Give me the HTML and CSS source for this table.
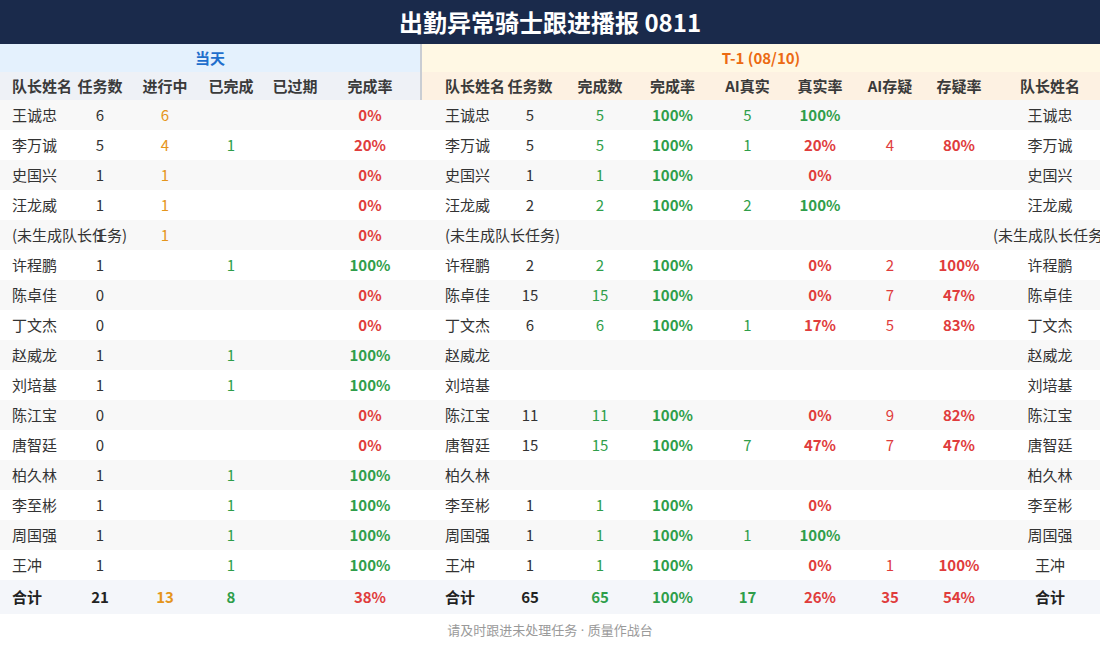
FILE: index.html
```html
<!DOCTYPE html>
<html lang="zh-CN">
<head>
<meta charset="utf-8">
<title>出勤异常骑士跟进播报 0811</title>
<link rel="stylesheet" href="styles.css">
</head>
<body>
<div class="page">
  <div class="title">出勤异常骑士跟进播报 0811</div>

  <div class="row sec">
    <div class="l sec-l">当天</div>
    <div class="r sec-r">T-1 (08/10)</div>
  </div>

  <div class="row head">
    <div class="l">
      <span class="name">队长姓名</span><span>任务数</span><span>进行中</span><span>已完成</span><span>已过期</span><span>完成率</span><span></span>
    </div>
    <div class="r">
      <span class="name">队长姓名</span><span>任务数</span><span>完成数</span><span>完成率</span><span>AI真实</span><span>真实率</span><span>AI存疑</span><span>存疑率</span><span>队长姓名</span>
    </div>
  </div>

  <div class="row alt">
    <div class="l"><span class="name">王诚忠</span><span>6</span><span class="o">6</span><span></span><span></span><span class="rd b">0%</span><span></span></div>
    <div class="r"><span class="name">王诚忠</span><span>5</span><span class="g">5</span><span class="g b">100%</span><span class="g">5</span><span class="g b">100%</span><span></span><span></span><span>王诚忠</span></div>
  </div>
  <div class="row">
    <div class="l"><span class="name">李万诚</span><span>5</span><span class="o">4</span><span class="g">1</span><span></span><span class="rd b">20%</span><span></span></div>
    <div class="r"><span class="name">李万诚</span><span>5</span><span class="g">5</span><span class="g b">100%</span><span class="g">1</span><span class="rd b">20%</span><span class="rd">4</span><span class="rd b">80%</span><span>李万诚</span></div>
  </div>
  <div class="row alt">
    <div class="l"><span class="name">史国兴</span><span>1</span><span class="o">1</span><span></span><span></span><span class="rd b">0%</span><span></span></div>
    <div class="r"><span class="name">史国兴</span><span>1</span><span class="g">1</span><span class="g b">100%</span><span></span><span class="rd b">0%</span><span></span><span></span><span>史国兴</span></div>
  </div>
  <div class="row">
    <div class="l"><span class="name">汪龙威</span><span>1</span><span class="o">1</span><span></span><span></span><span class="rd b">0%</span><span></span></div>
    <div class="r"><span class="name">汪龙威</span><span>2</span><span class="g">2</span><span class="g b">100%</span><span class="g">2</span><span class="g b">100%</span><span></span><span></span><span>汪龙威</span></div>
  </div>
  <div class="row alt">
    <div class="l"><span class="name">(未生成队长任务)</span><span>1</span><span class="o">1</span><span></span><span></span><span class="rd b">0%</span><span></span></div>
    <div class="r"><span class="name">(未生成队长任务)</span><span></span><span></span><span></span><span></span><span></span><span></span><span></span><span>(未生成队长任务)</span></div>
  </div>
  <div class="row">
    <div class="l"><span class="name">许程鹏</span><span>1</span><span></span><span class="g">1</span><span></span><span class="g b">100%</span><span></span></div>
    <div class="r"><span class="name">许程鹏</span><span>2</span><span class="g">2</span><span class="g b">100%</span><span></span><span class="rd b">0%</span><span class="rd">2</span><span class="rd b">100%</span><span>许程鹏</span></div>
  </div>
  <div class="row alt">
    <div class="l"><span class="name">陈卓佳</span><span>0</span><span></span><span></span><span></span><span class="rd b">0%</span><span></span></div>
    <div class="r"><span class="name">陈卓佳</span><span>15</span><span class="g">15</span><span class="g b">100%</span><span></span><span class="rd b">0%</span><span class="rd">7</span><span class="rd b">47%</span><span>陈卓佳</span></div>
  </div>
  <div class="row">
    <div class="l"><span class="name">丁文杰</span><span>0</span><span></span><span></span><span></span><span class="rd b">0%</span><span></span></div>
    <div class="r"><span class="name">丁文杰</span><span>6</span><span class="g">6</span><span class="g b">100%</span><span class="g">1</span><span class="rd b">17%</span><span class="rd">5</span><span class="rd b">83%</span><span>丁文杰</span></div>
  </div>
  <div class="row alt">
    <div class="l"><span class="name">赵威龙</span><span>1</span><span></span><span class="g">1</span><span></span><span class="g b">100%</span><span></span></div>
    <div class="r"><span class="name">赵威龙</span><span></span><span></span><span></span><span></span><span></span><span></span><span></span><span>赵威龙</span></div>
  </div>
  <div class="row">
    <div class="l"><span class="name">刘培基</span><span>1</span><span></span><span class="g">1</span><span></span><span class="g b">100%</span><span></span></div>
    <div class="r"><span class="name">刘培基</span><span></span><span></span><span></span><span></span><span></span><span></span><span></span><span>刘培基</span></div>
  </div>
  <div class="row alt">
    <div class="l"><span class="name">陈江宝</span><span>0</span><span></span><span></span><span></span><span class="rd b">0%</span><span></span></div>
    <div class="r"><span class="name">陈江宝</span><span>11</span><span class="g">11</span><span class="g b">100%</span><span></span><span class="rd b">0%</span><span class="rd">9</span><span class="rd b">82%</span><span>陈江宝</span></div>
  </div>
  <div class="row">
    <div class="l"><span class="name">唐智廷</span><span>0</span><span></span><span></span><span></span><span class="rd b">0%</span><span></span></div>
    <div class="r"><span class="name">唐智廷</span><span>15</span><span class="g">15</span><span class="g b">100%</span><span class="g">7</span><span class="rd b">47%</span><span class="rd">7</span><span class="rd b">47%</span><span>唐智廷</span></div>
  </div>
  <div class="row alt">
    <div class="l"><span class="name">柏久林</span><span>1</span><span></span><span class="g">1</span><span></span><span class="g b">100%</span><span></span></div>
    <div class="r"><span class="name">柏久林</span><span></span><span></span><span></span><span></span><span></span><span></span><span></span><span>柏久林</span></div>
  </div>
  <div class="row">
    <div class="l"><span class="name">李至彬</span><span>1</span><span></span><span class="g">1</span><span></span><span class="g b">100%</span><span></span></div>
    <div class="r"><span class="name">李至彬</span><span>1</span><span class="g">1</span><span class="g b">100%</span><span></span><span class="rd b">0%</span><span></span><span></span><span>李至彬</span></div>
  </div>
  <div class="row alt">
    <div class="l"><span class="name">周国强</span><span>1</span><span></span><span class="g">1</span><span></span><span class="g b">100%</span><span></span></div>
    <div class="r"><span class="name">周国强</span><span>1</span><span class="g">1</span><span class="g b">100%</span><span class="g">1</span><span class="g b">100%</span><span></span><span></span><span>周国强</span></div>
  </div>
  <div class="row">
    <div class="l"><span class="name">王冲</span><span>1</span><span></span><span class="g">1</span><span></span><span class="g b">100%</span><span></span></div>
    <div class="r"><span class="name">王冲</span><span>1</span><span class="g">1</span><span class="g b">100%</span><span></span><span class="rd b">0%</span><span class="rd">1</span><span class="rd b">100%</span><span>王冲</span></div>
  </div>

  <div class="row total">
    <div class="l"><span class="name">合计</span><span>21</span><span class="o">13</span><span class="g">8</span><span></span><span class="rd">38%</span><span></span></div>
    <div class="r"><span class="name">合计</span><span>65</span><span class="g">65</span><span class="g">100%</span><span class="g">17</span><span class="rd">26%</span><span class="rd">35</span><span class="rd">54%</span><span>合计</span></div>
  </div>

  <div class="footer">请及时跟进未处理任务<span class="dot"> · </span>质量作战台</div>
</div>
</body>
</html>
```

FILE: styles.css
```css
html, body {
  margin: 0;
  padding: 0;
  background: #ffffff;
  overflow: hidden;
}

.page {
  width: 1100px;
  font-family: "Noto Sans CJK SC", "Noto Sans", sans-serif;
  color: #333333;
}

.title {
  width: 1100px;
  height: 44px;
  line-height: 44px;
  background: #1a2a4b;
  color: #ffffff;
  font-size: 24px;
  font-weight: 700;
  text-align: center;
}

.row {
  display: flex;
  width: 1107px;
  height: 30px;
  line-height: 30px;
  font-size: 15px;
}

.row.alt {
  background: #f8f8f8;
}

.l {
  flex: none;
  width: 420px;
  display: grid;
  grid-template-columns: 70px 60px 70px 62px 66px 84px 8px;
}

.r {
  flex: none;
  width: 687px;
  display: grid;
  grid-template-columns: 75px 70px 70px 75px 75px 70px 70px 68px 114px;
}

.l > span,
.r > span {
  text-align: center;
  white-space: nowrap;
  overflow: visible;
  min-width: 0;
}

.l > .name {
  text-align: left;
  padding-left: 12px;
}

.r > .name {
  text-align: left;
  padding-left: 25px;
}

.sec {
  height: 28px;
  line-height: 28px;
  font-weight: 700;
  font-size: 15px;
}

.sec .l {
  display: block;
  text-align: center;
  background: #e4f1fd;
  color: #1f6fcc;
}

.sec .r {
  display: block;
  width: 680px;
  text-align: center;
  background: #fff8e4;
  color: #ec6a12;
  border-left: 2px solid #c9cdd3;
  box-sizing: border-box;
}

.head {
  height: 28px;
  line-height: 28px;
  font-weight: 700;
  color: #3a3a3a;
}

.head .l {
  background: #eef1f6;
}

.head .r {
  background: #fdf1e2;
  border-left: 2px solid #c9cdd3;
  box-sizing: border-box;
  grid-template-columns: 73px 70px 70px 75px 75px 70px 70px 68px 114px;
}

.head .r > .name {
  padding-left: 23px;
}

.total {
  height: 34px;
  line-height: 34px;
  background: #f4f6fa;
  font-weight: 700;
  color: #222222;
}

.b {
  font-weight: 700;
}

.o {
  color: #e5951c;
}

.g {
  color: #2f9e4a;
}

.rd {
  color: #e03c3c;
}

.footer {
  width: 1100px;
  height: 32px;
  line-height: 32px;
  text-align: center;
  font-size: 13px;
  color: #9a9a9a;
}

.dot {
  font-family: "Noto Sans", "DejaVu Sans", sans-serif;
}
```
